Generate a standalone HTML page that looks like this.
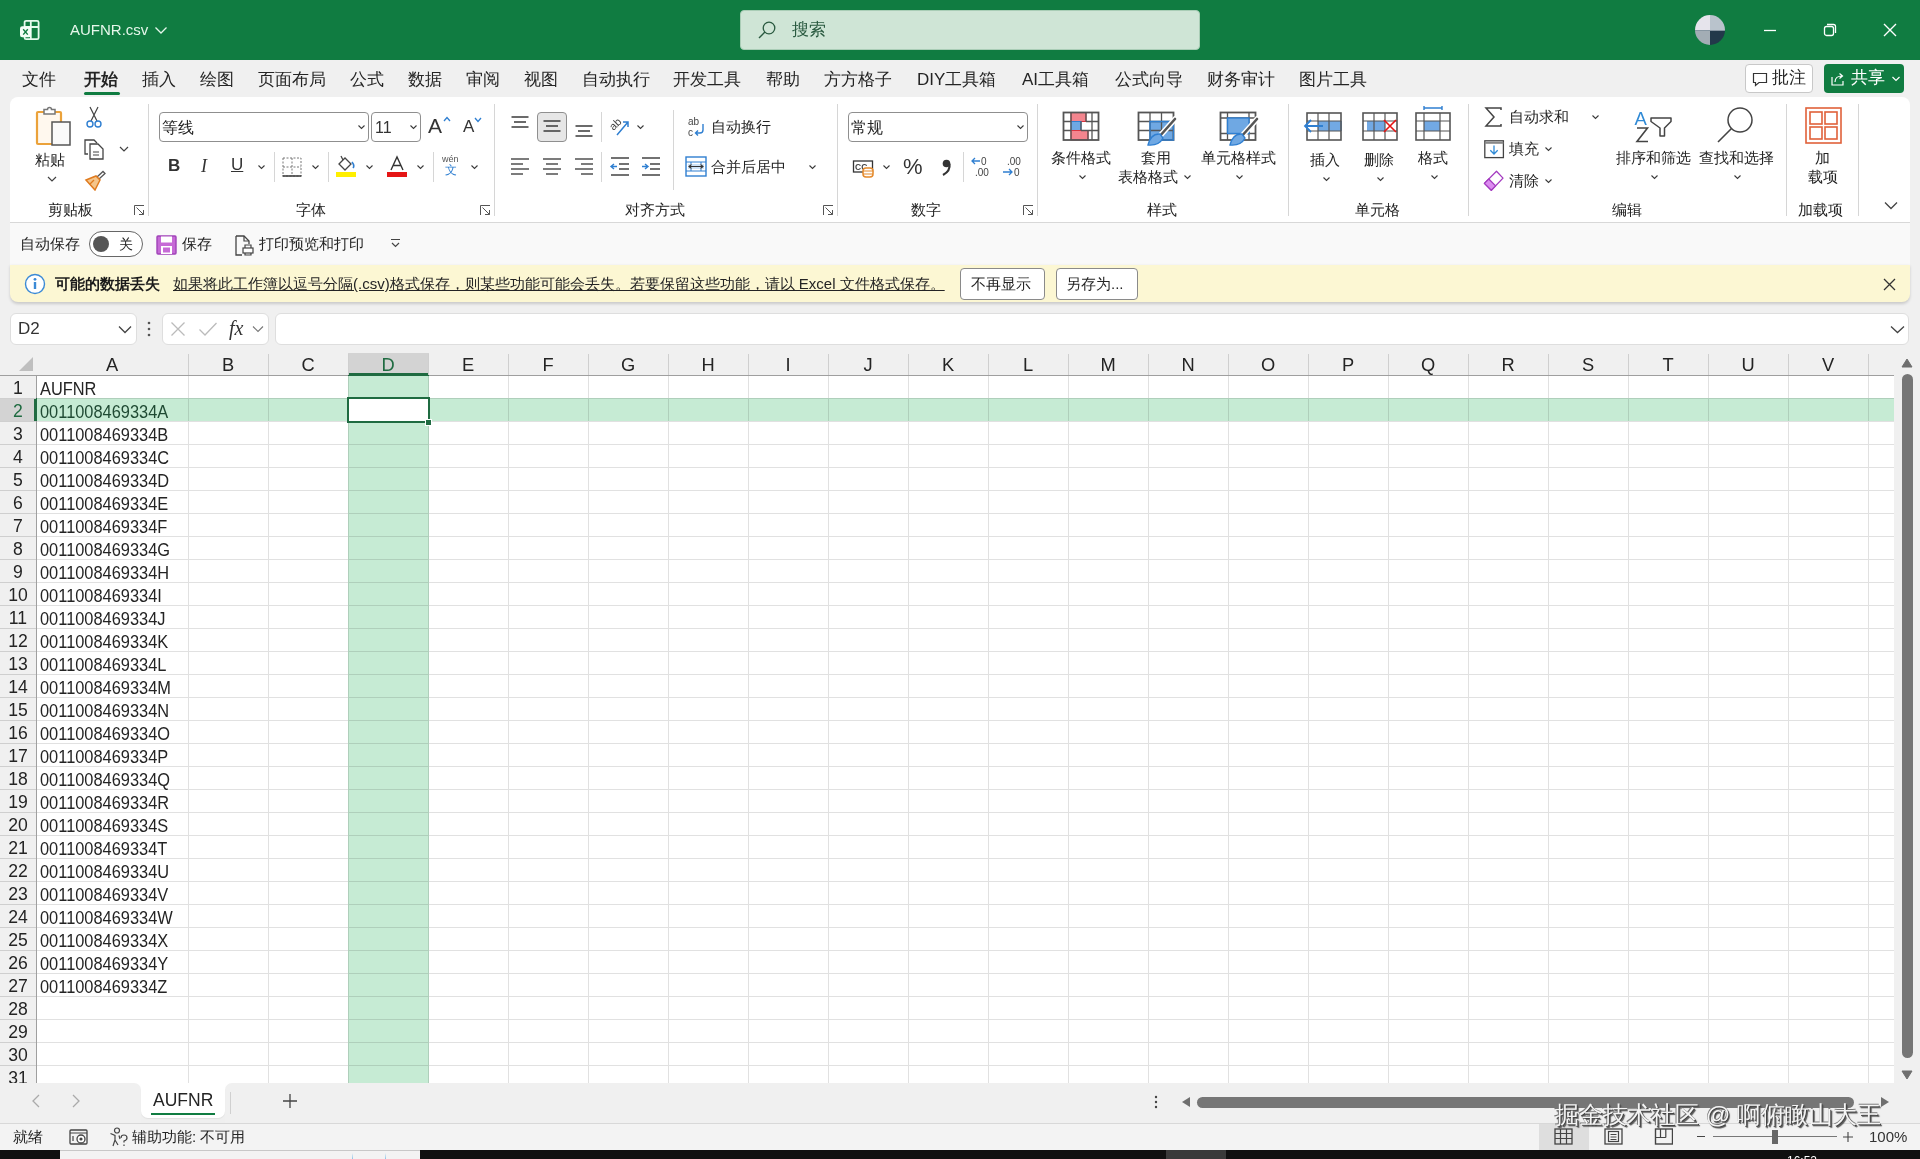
<!DOCTYPE html>
<html><head><meta charset="utf-8">
<style>
*{margin:0;padding:0;box-sizing:border-box}
html,body{width:1920px;height:1159px;overflow:hidden;background:#efefef;font-family:"Liberation Sans",sans-serif;color:#242424}
.a{position:absolute;white-space:nowrap}
#grid{position:absolute;left:0;top:353px;width:1894px;height:730px;background:#fff;overflow:hidden}
.hl{position:absolute;left:36px;width:1858px;height:1px;background:#e1e1e1}
.vl{position:absolute;top:22px;width:1px;height:708px;background:#e1e1e1}
.hs{position:absolute;top:1px;width:1px;height:21px;background:#cfcfcf}
.rs{position:absolute;left:0;width:36px;height:1px;background:#cfcfcf}
.ch{position:absolute;top:0;height:22px;line-height:24px;text-align:center;font-size:18.3px}
.rh{position:absolute;left:0;width:36px;height:23px;line-height:23px;text-align:center;font-size:17.6px}
.cell{position:absolute;left:40px;height:23px;line-height:24px;font-size:16.4px;transform:scaleY(1.09);transform-origin:0 17px}
.tab{position:absolute;top:69px;font-size:17px;line-height:22px;color:#242424}
.rl{position:absolute;font-size:15px;line-height:20px;color:#242424;white-space:nowrap}
.sep{position:absolute;width:1px;background:#d6d6d6}
.chev{position:absolute}
.dd{position:absolute;background:#fff;border:1px solid #8f8f8f;border-radius:4px}

</style></head><body>
<div class="a" style="left:0;top:0;width:1920px;height:60px;background:#107c41"></div>
<svg class="a" style="left:18px;top:18px" width="24" height="24" viewBox="0 0 24 24"><rect x="6.6" y="2.8" width="14" height="18.4" rx="1.5" fill="none" stroke="#e6fbee" stroke-width="1.8"/><path d="M6.6 9H20.6M12.8 2.8V21.2" stroke="#e6fbee" stroke-width="1.8"/><rect x="2" y="8.3" width="11" height="11" rx="2.2" fill="#f4fff8"/><path d="M5.2 11.3L9.8 16.6M9.8 11.3L5.2 16.6" stroke="#107c41" stroke-width="1.4"/></svg>
<div class="a" style="left:70px;top:20px;font-size:15px;line-height:20px;color:#e6f7eb">AUFNR.csv</div>
<svg class="a" style="left:154px;top:25px" width="14" height="10"><path d="M1.5 2.5L7 8L12.5 2.5" fill="none" stroke="#e6f7eb" stroke-width="1.3"/></svg>
<div class="a" style="left:740px;top:10px;width:460px;height:40px;background:#cfe5d6;border:1px solid #a9cdb6;border-radius:4px"></div>
<svg class="a" style="left:756px;top:19px" width="22" height="22" viewBox="0 0 22 22"><circle cx="13" cy="9" r="5.8" fill="none" stroke="#2a5a40" stroke-width="1.3"/><path d="M8.9 13.1L3 19" stroke="#2a5a40" stroke-width="1.4"/></svg>
<div class="a" style="left:792px;top:19px;font-size:17px;line-height:22px;color:#2a5a40">搜索</div>
<svg class="a" style="left:1695px;top:15px" width="30" height="30" viewBox="0 0 30 30"><defs><clipPath id="av"><circle cx="15" cy="15" r="15"/></clipPath></defs><g clip-path="url(#av)"><rect width="15" height="15" fill="#e6e4ec"/><rect x="15" y="0" width="15" height="15" fill="#b9c3cc"/><rect x="0" y="15" width="15" height="15" fill="#a3adb5"/><rect x="15" y="15" width="15" height="15" fill="#22394a"/><path d="M0 15.5H30" stroke="#8796a2" stroke-width="1"/></g></svg>
<svg class="a" style="left:1762px;top:22px" width="16" height="16"><path d="M2 8.5H14" stroke="#fff" stroke-width="1.3"/></svg>
<svg class="a" style="left:1822px;top:22px" width="16" height="16"><rect x="2.5" y="4.5" width="9" height="9" rx="2" fill="none" stroke="#fff" stroke-width="1.3"/><path d="M5 2.5H11.5A2 2 0 0 1 13.5 4.5V11" fill="none" stroke="#fff" stroke-width="1.3"/></svg>
<svg class="a" style="left:1881px;top:21px" width="18" height="18"><path d="M3 3L15 15M15 3L3 15" stroke="#fff" stroke-width="1.4"/></svg>
<div class="a" style="left:0;top:60px;width:1920px;height:293px;background:#f0f0f0"></div>
<div class="tab" style="left:22px">文件</div>
<div class="tab" style="left:84px;font-weight:bold">开始</div>
<div class="a" style="left:84px;top:92px;width:36px;height:3px;border-radius:2px;background:#107c41"></div>
<div class="tab" style="left:142px">插入</div>
<div class="tab" style="left:200px">绘图</div>
<div class="tab" style="left:258px">页面布局</div>
<div class="tab" style="left:350px">公式</div>
<div class="tab" style="left:408px">数据</div>
<div class="tab" style="left:466px">审阅</div>
<div class="tab" style="left:524px">视图</div>
<div class="tab" style="left:582px">自动执行</div>
<div class="tab" style="left:673px">开发工具</div>
<div class="tab" style="left:766px">帮助</div>
<div class="tab" style="left:824px">方方格子</div>
<div class="tab" style="left:917px">DIY工具箱</div>
<div class="tab" style="left:1022px">AI工具箱</div>
<div class="tab" style="left:1115px">公式向导</div>
<div class="tab" style="left:1207px">财务审计</div>
<div class="tab" style="left:1299px">图片工具</div>
<div class="a" style="left:1745px;top:64px;width:68px;height:29px;background:#fff;border:1px solid #c8c8c8;border-radius:4px"></div>
<svg class="a" style="left:1751px;top:70px" width="18" height="18"><path d="M2.5 3.5H15.5V12.5H8L4.5 15.5V12.5H2.5Z" fill="none" stroke="#333" stroke-width="1.2"/></svg>
<div class="a" style="left:1772px;top:67px;font-size:17px;line-height:22px;color:#242424">批注</div>
<div class="a" style="left:1824px;top:64px;width:80px;height:29px;background:#107c41;border-radius:4px"></div>
<svg class="a" style="left:1829px;top:70px" width="18" height="18"><path d="M3 7V15H14V11" fill="none" stroke="#fff" stroke-width="1.2"/><path d="M6 12C6 8 9 6 13 6M10.5 3.5L13.5 6L10.5 8.5" fill="none" stroke="#fff" stroke-width="1.2"/></svg>
<div class="a" style="left:1851px;top:67px;font-size:17px;line-height:22px;color:#fff">共享</div>
<svg class="a" style="left:1891px;top:75px" width="10" height="8"><path d="M1.5 2L5 5.5L8.5 2" fill="none" stroke="#fff" stroke-width="1.2"/></svg>
<div class="a" style="left:10px;top:97px;width:1900px;height:125px;background:#fff;border-radius:8px 8px 0 0"></div>
<svg class="a" style="left:35px;top:106px" width="38" height="42" viewBox="0 0 38 42"><rect x="2" y="6" width="24" height="32" rx="1" fill="#fff8ee" stroke="#eba23a" stroke-width="2.2"/><path d="M9 6V3.5H12.5A2 2 0 0 1 16.5 3.5H20V8H9Z" fill="#fff" stroke="#777" stroke-width="1.5"/><rect x="17" y="16" width="18" height="23" fill="#fafafa" stroke="#555" stroke-width="1.5"/></svg>
<div class="rl" style="left:35px;top:150px;">粘贴</div>
<svg class="a" style="left:47px;top:176px" width="10" height="6"><path d="M1 1L5.0 5L9 1" fill="none" stroke="#424242" stroke-width="1.2"/></svg>
<svg class="a" style="left:85px;top:106px" width="18" height="23" viewBox="0 0 18 23"><path d="M5 1L12 15M13 1L6 15" stroke="#444" stroke-width="1.2" fill="none"/><circle cx="5" cy="18" r="3" fill="none" stroke="#2f7fd1" stroke-width="1.4"/><circle cx="13" cy="18" r="3" fill="none" stroke="#2f7fd1" stroke-width="1.4"/></svg>
<svg class="a" style="left:83px;top:139px" width="22" height="21" viewBox="0 0 22 21"><path d="M5 15H2V1H11L14 4" fill="none" stroke="#444" stroke-width="1.3"/><path d="M7 5H15L20 10V20H7Z" fill="#fff" stroke="#444" stroke-width="1.3"/><path d="M10 13H16M10 16H16" stroke="#444" stroke-width="1"/></svg>
<svg class="a" style="left:119px;top:146px" width="10" height="6"><path d="M1 1L5.0 5L9 1" fill="none" stroke="#424242" stroke-width="1.2"/></svg>
<svg class="a" style="left:84px;top:170px" width="22" height="21" viewBox="0 0 22 21"><path d="M13 7L19 1.5L21 3.5L15 9" fill="none" stroke="#555" stroke-width="1.3"/><path d="M2 10L12 6L16 10L11 20Z" fill="#f5c58a" stroke="#e07b1f" stroke-width="1.5"/><path d="M6 14L10 10" stroke="#e07b1f" stroke-width="1.2"/></svg>
<div class="rl" style="left:48px;top:200px;">剪贴板</div>
<svg class="a" style="left:134px;top:205px" width="11" height="11"><path d="M0.5 10V0.5H10M2.5 2.5L9.5 9.5M5 9.5H9.5V5" fill="none" stroke="#555" stroke-width="1"/></svg>
<div class="sep" style="left:148px;top:104px;height:112px"></div>
<div class="dd" style="left:159px;top:112px;width:210px;height:30px"></div>
<div class="rl" style="left:162px;top:118px;font-size:16px">等线</div>
<svg class="a" style="left:357px;top:124px" width="9" height="6"><path d="M1.5 1.5L4.5 4.5L7.5 1.5" fill="none" stroke="#3a3a3a" stroke-width="1.1"/></svg>
<div class="dd" style="left:371px;top:112px;width:50px;height:30px"></div>
<div class="a" style="left:375px;top:118px;font-size:16px;line-height:20px;color:#333">11</div>
<svg class="a" style="left:409px;top:124px" width="9" height="6"><path d="M1.5 1.5L4.5 4.5L7.5 1.5" fill="none" stroke="#3a3a3a" stroke-width="1.1"/></svg>
<div class="a" style="left:428px;top:114px;font-size:21px;line-height:24px;color:#333">A</div><svg class="a" style="left:443px;top:116px" width="8" height="6"><path d="M1 5L4 1.5L7 5" fill="none" stroke="#2f7fd1" stroke-width="1.3"/></svg>
<div class="a" style="left:463px;top:117px;font-size:17px;line-height:20px;color:#333">A</div><svg class="a" style="left:474px;top:117px" width="8" height="6"><path d="M1 1L4 4.5L7 1" fill="none" stroke="#2f7fd1" stroke-width="1.3"/></svg>
<div class="a" style="left:168px;top:156px;font-size:17px;line-height:20px;font-weight:bold;color:#333">B</div>
<div class="a" style="left:201px;top:156px;font-size:18px;line-height:20px;font-style:italic;font-family:'Liberation Serif',serif;color:#333">I</div>
<div class="a" style="left:231px;top:155px;font-size:17px;line-height:20px;color:#333;text-decoration:underline">U</div>
<svg class="a" style="left:257px;top:164px" width="9" height="6"><path d="M1.5 1.5L4.5 4.5L7.5 1.5" fill="none" stroke="#3a3a3a" stroke-width="1.1"/></svg>
<div class="sep" style="left:274px;top:152px;height:30px"></div>
<svg class="a" style="left:282px;top:157px" width="20" height="20" viewBox="0 0 20 20"><rect x="1" y="1" width="18" height="18" fill="none" stroke="#777" stroke-width="1" stroke-dasharray="2 1.5"/><path d="M10 1V19M1 10H19" stroke="#777" stroke-width="1" stroke-dasharray="2 1.5"/><path d="M0.5 19H19.5" stroke="#444" stroke-width="1.6"/></svg>
<svg class="a" style="left:311px;top:164px" width="9" height="6"><path d="M1.5 1.5L4.5 4.5L7.5 1.5" fill="none" stroke="#3a3a3a" stroke-width="1.1"/></svg>
<div class="sep" style="left:328px;top:152px;height:30px"></div>
<svg class="a" style="left:335px;top:154px" width="22" height="24" viewBox="0 0 22 24"><path d="M4 10L10 4L16 10L10 16Z" fill="#fff" stroke="#444" stroke-width="1.3"/><path d="M8 6L6 2" stroke="#444" stroke-width="1.3"/><path d="M17 8Q20 12 18 14" fill="none" stroke="#2f7fd1" stroke-width="1.6"/><rect x="1" y="18" width="20" height="5" fill="#ffef00"/></svg>
<svg class="a" style="left:365px;top:164px" width="9" height="6"><path d="M1.5 1.5L4.5 4.5L7.5 1.5" fill="none" stroke="#3a3a3a" stroke-width="1.1"/></svg>
<svg class="a" style="left:386px;top:154px" width="22" height="24" viewBox="0 0 22 24"><path d="M5 16L11 3L17 16M7.3 11.5H14.7" fill="none" stroke="#333" stroke-width="1.4"/><rect x="1" y="18" width="20" height="5" fill="#e51515"/></svg>
<svg class="a" style="left:416px;top:164px" width="9" height="6"><path d="M1.5 1.5L4.5 4.5L7.5 1.5" fill="none" stroke="#3a3a3a" stroke-width="1.1"/></svg>
<div class="sep" style="left:433px;top:152px;height:30px"></div>
<div class="a" style="left:442px;top:154px;font-size:9px;line-height:10px;color:#555">wén</div><div class="a" style="left:445px;top:163px;font-size:12px;line-height:14px;color:#2f7fd1">文</div>
<svg class="a" style="left:470px;top:164px" width="9" height="6"><path d="M1.5 1.5L4.5 4.5L7.5 1.5" fill="none" stroke="#3a3a3a" stroke-width="1.1"/></svg>
<div class="rl" style="left:296px;top:200px;">字体</div>
<svg class="a" style="left:480px;top:205px" width="11" height="11"><path d="M0.5 10V0.5H10M2.5 2.5L9.5 9.5M5 9.5H9.5V5" fill="none" stroke="#555" stroke-width="1"/></svg>
<div class="sep" style="left:494px;top:104px;height:112px"></div>
<svg class="a" style="left:510px;top:115px" width="22" height="19"><path d="M1.5 2 H18.5" stroke="#3a3a3a" stroke-width="1.5"/><path d="M4 7 H16" stroke="#3a3a3a" stroke-width="1.5"/><path d="M1.5 12 H18.5" stroke="#3a3a3a" stroke-width="1.5"/></svg>
<div class="a" style="left:537px;top:112px;width:30px;height:30px;background:#e6e6e6;border:1px solid #8f8f8f;border-radius:4px"></div>
<svg class="a" style="left:542px;top:119px" width="22" height="19"><path d="M1.5 2 H18.5" stroke="#3a3a3a" stroke-width="1.5"/><path d="M4 7 H16" stroke="#3a3a3a" stroke-width="1.5"/><path d="M1.5 12 H18.5" stroke="#3a3a3a" stroke-width="1.5"/></svg>
<svg class="a" style="left:574px;top:124px" width="22" height="19"><path d="M1.5 2 H18.5" stroke="#3a3a3a" stroke-width="1.5"/><path d="M4 7 H16" stroke="#3a3a3a" stroke-width="1.5"/><path d="M1.5 12 H18.5" stroke="#3a3a3a" stroke-width="1.5"/></svg>
<div class="sep" style="left:601px;top:112px;height:30px"></div>
<svg class="a" style="left:607px;top:114px" width="26" height="24" viewBox="0 0 26 24"><text x="2" y="14" font-size="11" fill="#444" transform="rotate(-45 8 10)" font-family="Liberation Sans">ab</text><path d="M10 21L21 8M16 8H21V13" fill="none" stroke="#2f7fd1" stroke-width="1.5"/></svg>
<svg class="a" style="left:636px;top:124px" width="9" height="6"><path d="M1.5 1.5L4.5 4.5L7.5 1.5" fill="none" stroke="#3a3a3a" stroke-width="1.1"/></svg>
<div class="sep" style="left:673px;top:110px;height:80px"></div>
<svg class="a" style="left:687px;top:116px" width="22" height="22" viewBox="0 0 22 22"><text x="1" y="9" font-size="10" fill="#444" font-family="Liberation Sans">ab</text><text x="1" y="20" font-size="10" fill="#444" font-family="Liberation Sans">c</text><path d="M16 8V14Q16 17 13 17H9M11 14.5L8.5 17L11 19.5" fill="none" stroke="#2f7fd1" stroke-width="1.4"/></svg>
<div class="rl" style="left:711px;top:117px;">自动换行</div>
<svg class="a" style="left:510px;top:157px" width="22" height="24"><path d="M1 2 H19" stroke="#444" stroke-width="1.4"/><path d="M1 7 H13" stroke="#444" stroke-width="1.4"/><path d="M1 12 H19" stroke="#444" stroke-width="1.4"/><path d="M1 17 H13" stroke="#444" stroke-width="1.4"/></svg>
<svg class="a" style="left:542px;top:157px" width="22" height="24"><path d="M1 2 H19" stroke="#444" stroke-width="1.4"/><path d="M4 7 H16" stroke="#444" stroke-width="1.4"/><path d="M1 12 H19" stroke="#444" stroke-width="1.4"/><path d="M4 17 H16" stroke="#444" stroke-width="1.4"/></svg>
<svg class="a" style="left:574px;top:157px" width="22" height="24"><path d="M1 2 H19" stroke="#444" stroke-width="1.4"/><path d="M7 7 H19" stroke="#444" stroke-width="1.4"/><path d="M1 12 H19" stroke="#444" stroke-width="1.4"/><path d="M7 17 H19" stroke="#444" stroke-width="1.4"/></svg>
<div class="sep" style="left:601px;top:152px;height:30px"></div>
<svg class="a" style="left:609px;top:156px" width="22" height="22" viewBox="0 0 22 22"><path d="M2 2H20M10 8H20M10 13H20M2 19H20" stroke="#444" stroke-width="1.4"/><path d="M8 10.5H2M5 8L2 10.5L5 13" fill="none" stroke="#2f7fd1" stroke-width="1.4"/></svg>
<svg class="a" style="left:640px;top:156px" width="22" height="22" viewBox="0 0 22 22"><path d="M2 2H20M10 8H20M10 13H20M2 19H20" stroke="#444" stroke-width="1.4"/><path d="M2 10.5H8M5 8L8 10.5L5 13" fill="none" stroke="#2f7fd1" stroke-width="1.4"/></svg>
<svg class="a" style="left:685px;top:156px" width="22" height="21" viewBox="0 0 22 21"><rect x="1" y="1" width="20" height="19" fill="#fff" stroke="#2f7fd1" stroke-width="1.4"/><path d="M1 6H21M1 15H21M6 6V15M16 6V15" stroke="#2f7fd1" stroke-width="1"/><rect x="3" y="8" width="16" height="5" fill="#cfe3f7"/><path d="M4 10.5H18M6.5 8.5L4 10.5L6.5 12.5M15.5 8.5L18 10.5L15.5 12.5" fill="none" stroke="#333" stroke-width="1.1"/></svg>
<div class="rl" style="left:711px;top:157px;">合并后居中</div>
<svg class="a" style="left:808px;top:164px" width="9" height="6"><path d="M1.5 1.5L4.5 4.5L7.5 1.5" fill="none" stroke="#3a3a3a" stroke-width="1.1"/></svg>
<div class="rl" style="left:625px;top:200px;">对齐方式</div>
<svg class="a" style="left:823px;top:205px" width="11" height="11"><path d="M0.5 10V0.5H10M2.5 2.5L9.5 9.5M5 9.5H9.5V5" fill="none" stroke="#555" stroke-width="1"/></svg>
<div class="sep" style="left:837px;top:104px;height:112px"></div>
<div class="dd" style="left:848px;top:112px;width:180px;height:30px"></div>
<div class="rl" style="left:851px;top:118px;font-size:16px">常规</div>
<svg class="a" style="left:1016px;top:124px" width="9" height="6"><path d="M1.5 1.5L4.5 4.5L7.5 1.5" fill="none" stroke="#3a3a3a" stroke-width="1.1"/></svg>
<svg class="a" style="left:852px;top:156px" width="24" height="22" viewBox="0 0 24 22"><rect x="1.5" y="5" width="19" height="11" fill="#fff" stroke="#333" stroke-width="1.3"/><text x="3" y="14" font-size="8.5" font-weight="bold" fill="#444" font-family="Liberation Sans">CC</text><rect x="11" y="12" width="10" height="9" rx="3" fill="#fff" stroke="#e5892a" stroke-width="1.5"/><path d="M11 15H21M11 18H21" stroke="#e5892a" stroke-width="1.1"/></svg>
<svg class="a" style="left:882px;top:164px" width="9" height="6"><path d="M1.5 1.5L4.5 4.5L7.5 1.5" fill="none" stroke="#3a3a3a" stroke-width="1.1"/></svg>
<div class="a" style="left:903px;top:155px;font-size:22px;line-height:24px;color:#333">%</div>
<svg class="a" style="left:940px;top:159px" width="12" height="17" viewBox="0 0 12 17"><circle cx="6.5" cy="4.5" r="3.8" fill="#333"/><path d="M9.5 5Q10.5 12 3 16" fill="none" stroke="#333" stroke-width="2.2"/></svg>
<div class="sep" style="left:963px;top:152px;height:30px"></div>
<svg class="a" style="left:970px;top:155px" width="22" height="24" viewBox="0 0 22 24"><text x="11" y="10" font-size="10" fill="#444" font-family="Liberation Sans">0</text><text x="5" y="21" font-size="10" fill="#444" font-family="Liberation Sans">.00</text><path d="M10 6H2M5 3L2 6L5 9" fill="none" stroke="#2f7fd1" stroke-width="1.3"/></svg>
<svg class="a" style="left:1001px;top:155px" width="22" height="24" viewBox="0 0 22 24"><text x="6" y="10" font-size="10" fill="#444" font-family="Liberation Sans">.00</text><text x="13" y="21" font-size="10" fill="#444" font-family="Liberation Sans">0</text><path d="M2 17H11M8 14L11 17L8 20" fill="none" stroke="#2f7fd1" stroke-width="1.3"/></svg>
<div class="rl" style="left:911px;top:200px;">数字</div>
<svg class="a" style="left:1023px;top:205px" width="11" height="11"><path d="M0.5 10V0.5H10M2.5 2.5L9.5 9.5M5 9.5H9.5V5" fill="none" stroke="#555" stroke-width="1"/></svg>
<div class="sep" style="left:1037px;top:104px;height:112px"></div>
<svg class="a" style="left:1062px;top:111px" width="38" height="31" viewBox="0 0 38 31"><rect x="9" y="1.5" width="15" height="9" fill="#f4858e" stroke="#d9343f" stroke-width="1"/><rect x="9" y="10.5" width="10" height="9" fill="#6fa8e3" stroke="#2f7fd1" stroke-width="1"/><rect x="9" y="19.5" width="17" height="9.5" fill="#f4858e" stroke="#d9343f" stroke-width="1"/><rect x="1.5" y="1.5" width="35" height="27.5" fill="none" stroke="#555" stroke-width="1.8"/><path d="M9 1.5V29M24 1.5V10.5M19 10.5V19.5M26 19.5V29M30 1.5V29M1.5 10.5H9M24 10.5H36.5M1.5 19.5H9M19 19.5H36.5" stroke="#555" stroke-width="1.3" fill="none"/></svg>
<div class="rl" style="left:1051px;top:148px;">条件格式</div>
<svg class="a" style="left:1078px;top:174px" width="9" height="6"><path d="M1.5 1.5L4.5 4.5L7.5 1.5" fill="none" stroke="#3a3a3a" stroke-width="1.1"/></svg>
<svg class="a" style="left:1137px;top:111px" width="40" height="36" viewBox="0 0 40 36"><rect x="13" y="10.5" width="23.5" height="18.5" fill="#6fa8e3"/><rect x="1.5" y="1.5" width="35" height="27.5" fill="none" stroke="#555" stroke-width="1.8"/><path d="M13 1.5V29M24.5 1.5V29M1.5 10.5H36.5M1.5 19.5H36.5" stroke="#555" stroke-width="1.3"/><path d="M13 10.5H36.5V29H13Z" fill="none" stroke="#2f7fd1" stroke-width="1.3"/><path d="M38 8L22 26" stroke="#fff" stroke-width="5.5" stroke-linecap="round"/><path d="M38 8L22 26" stroke="#555" stroke-width="2.6" stroke-linecap="round"/><path d="M23 23Q14 22 11 34Q22 35 26 27Z" fill="#6fa8e3" stroke="#2f7fd1" stroke-width="1.4"/></svg>
<div class="rl" style="left:1141px;top:148px;">套用</div>
<div class="rl" style="left:1118px;top:167px;">表格格式</div>
<svg class="a" style="left:1183px;top:174px" width="9" height="6"><path d="M1.5 1.5L4.5 4.5L7.5 1.5" fill="none" stroke="#3a3a3a" stroke-width="1.1"/></svg>
<svg class="a" style="left:1219px;top:111px" width="40" height="36" viewBox="0 0 40 36"><rect x="1.5" y="1.5" width="35" height="27.5" fill="none" stroke="#555" stroke-width="1.8"/><path d="M8.5 1.5V29M30 1.5V29M1.5 7H36.5M1.5 22.5H36.5" stroke="#555" stroke-width="1.3"/><rect x="8.5" y="7" width="21.5" height="15.5" fill="#6fa8e3" stroke="#2f7fd1" stroke-width="1.4"/><path d="M38 8L22 26" stroke="#fff" stroke-width="5.5" stroke-linecap="round"/><path d="M38 8L22 26" stroke="#555" stroke-width="2.6" stroke-linecap="round"/><path d="M23 23Q14 22 11 34Q22 35 26 27Z" fill="#6fa8e3" stroke="#2f7fd1" stroke-width="1.4"/></svg>
<div class="rl" style="left:1201px;top:148px;">单元格样式</div>
<svg class="a" style="left:1235px;top:174px" width="9" height="6"><path d="M1.5 1.5L4.5 4.5L7.5 1.5" fill="none" stroke="#3a3a3a" stroke-width="1.1"/></svg>
<div class="rl" style="left:1147px;top:200px;">样式</div>
<div class="sep" style="left:1288px;top:104px;height:112px"></div>
<svg class="a" style="left:1306px;top:112px" width="36" height="29" viewBox="0 0 36 29"><rect x="12" y="9" width="28" height="10" fill="#72a9e4"/><rect x="1" y="1" width="34" height="27" fill="none" stroke="#555" stroke-width="1.6"/><path d="M12 1V28" stroke="#555" stroke-width="1.2"/><path d="M23 1V28" stroke="#555" stroke-width="1.2"/><path d="M1 9H35" stroke="#555" stroke-width="1.2"/><path d="M1 19H35" stroke="#555" stroke-width="1.2"/></svg><svg class="a" style="left:1303px;top:118px" width="22" height="16"><path d="M20 8H3M8 2L2 8L8 14" fill="none" stroke="#2f7fd1" stroke-width="1.8"/></svg>
<div class="rl" style="left:1310px;top:150px;">插入</div>
<svg class="a" style="left:1322px;top:176px" width="9" height="6"><path d="M1.5 1.5L4.5 4.5L7.5 1.5" fill="none" stroke="#3a3a3a" stroke-width="1.1"/></svg>
<svg class="a" style="left:1362px;top:112px" width="36" height="29" viewBox="0 0 36 29"><rect x="5" y="9" width="18" height="10" fill="#72a9e4"/><rect x="1" y="1" width="34" height="27" fill="none" stroke="#555" stroke-width="1.6"/><path d="M12 1V28" stroke="#555" stroke-width="1.2"/><path d="M23 1V28" stroke="#555" stroke-width="1.2"/><path d="M1 9H35" stroke="#555" stroke-width="1.2"/><path d="M1 19H35" stroke="#555" stroke-width="1.2"/></svg><svg class="a" style="left:1382px;top:118px" width="16" height="16"><path d="M2 2L14 14M14 2L2 14" stroke="#e51515" stroke-width="1.6"/></svg>
<div class="rl" style="left:1364px;top:150px;">删除</div>
<svg class="a" style="left:1376px;top:176px" width="9" height="6"><path d="M1.5 1.5L4.5 4.5L7.5 1.5" fill="none" stroke="#3a3a3a" stroke-width="1.1"/></svg>
<svg class="a" style="left:1423px;top:105px" width="20" height="6"><path d="M1 1V5M19 1V5M1 3H19" stroke="#2f7fd1" stroke-width="1.4"/></svg>
<svg class="a" style="left:1415px;top:112px" width="36" height="29" viewBox="0 0 36 29"><rect x="9" y="9" width="16" height="10" fill="#72a9e4"/><rect x="1" y="1" width="34" height="27" fill="none" stroke="#555" stroke-width="1.6"/><path d="M9 1V28" stroke="#555" stroke-width="1.2"/><path d="M25 1V28" stroke="#555" stroke-width="1.2"/><path d="M1 9H35" stroke="#555" stroke-width="1.2"/><path d="M1 19H35" stroke="#555" stroke-width="1.2"/></svg>
<div class="rl" style="left:1418px;top:148px;">格式</div>
<svg class="a" style="left:1430px;top:174px" width="9" height="6"><path d="M1.5 1.5L4.5 4.5L7.5 1.5" fill="none" stroke="#3a3a3a" stroke-width="1.1"/></svg>
<div class="rl" style="left:1355px;top:200px;">单元格</div>
<div class="sep" style="left:1468px;top:104px;height:112px"></div>
<svg class="a" style="left:1484px;top:107px" width="20" height="20"><path d="M17 3V1H2L10 10L2 19H17V17" fill="none" stroke="#444" stroke-width="1.5"/></svg>
<div class="rl" style="left:1509px;top:107px;">自动求和</div>
<svg class="a" style="left:1591px;top:114px" width="9" height="6"><path d="M1.5 1.5L4.5 4.5L7.5 1.5" fill="none" stroke="#3a3a3a" stroke-width="1.1"/></svg>
<svg class="a" style="left:1483px;top:139px" width="22" height="20" viewBox="0 0 22 20"><rect x="1.8" y="1.8" width="18.6" height="16.8" fill="#fff" stroke="#444" stroke-width="1.3"/><path d="M1.8 3.8H20.4" stroke="#888" stroke-width="2"/><path d="M11 6.5V15M7.3 11.3L11 15L14.7 11.3" fill="none" stroke="#2f8ad6" stroke-width="1.3"/></svg>
<div class="rl" style="left:1509px;top:139px;">填充</div>
<svg class="a" style="left:1544px;top:146px" width="9" height="6"><path d="M1.5 1.5L4.5 4.5L7.5 1.5" fill="none" stroke="#3a3a3a" stroke-width="1.1"/></svg>
<svg class="a" style="left:1483px;top:170px" width="22" height="22" viewBox="0 0 22 22"><path d="M13.5 1.3L20 8.1L8.3 20.3L1.4 13.4Z" fill="#fff" stroke="#a43bc0" stroke-width="1.3" stroke-linejoin="round"/><path d="M1.4 13.4L5.8 9L12.6 15.9L8.3 20.3Z" fill="#dc8cf0" stroke="#a43bc0" stroke-width="1.3" stroke-linejoin="round"/></svg>
<div class="rl" style="left:1509px;top:171px;">清除</div>
<svg class="a" style="left:1544px;top:178px" width="9" height="6"><path d="M1.5 1.5L4.5 4.5L7.5 1.5" fill="none" stroke="#3a3a3a" stroke-width="1.1"/></svg>
<svg class="a" style="left:1633px;top:106px" width="40" height="38" viewBox="0 0 40 38"><text x="1.5" y="18.5" font-size="18.5" fill="#2f8ad6" font-family="Liberation Sans">A</text><path d="M4 22H14.5L4 35.5H15" fill="none" stroke="#444" stroke-width="1.6"/><path d="M18 12H38V15.5L31.5 22V30H27V22L18 15.5Z" fill="none" stroke="#444" stroke-width="1.5" stroke-linejoin="round"/></svg>
<div class="rl" style="left:1616px;top:148px;">排序和筛选</div>
<svg class="a" style="left:1650px;top:174px" width="9" height="6"><path d="M1.5 1.5L4.5 4.5L7.5 1.5" fill="none" stroke="#3a3a3a" stroke-width="1.1"/></svg>
<svg class="a" style="left:1716px;top:106px" width="40" height="40" viewBox="0 0 40 40"><circle cx="24" cy="14" r="12" fill="none" stroke="#444" stroke-width="1.5"/><path d="M15.5 22.5L2 36" stroke="#444" stroke-width="1.6"/></svg>
<div class="rl" style="left:1699px;top:148px;">查找和选择</div>
<svg class="a" style="left:1733px;top:174px" width="9" height="6"><path d="M1.5 1.5L4.5 4.5L7.5 1.5" fill="none" stroke="#3a3a3a" stroke-width="1.1"/></svg>
<div class="rl" style="left:1612px;top:200px;">编辑</div>
<div class="sep" style="left:1786px;top:104px;height:112px"></div>
<svg class="a" style="left:1805px;top:107px" width="37" height="37" viewBox="0 0 37 37"><rect x="1" y="1" width="35" height="35" fill="none" stroke="#e0613a" stroke-width="1.6"/><rect x="5" y="5" width="12" height="12" fill="none" stroke="#e0613a" stroke-width="1.6"/><rect x="20" y="5" width="12" height="12" fill="none" stroke="#e0613a" stroke-width="1.6"/><rect x="5" y="20" width="12" height="12" fill="none" stroke="#e0613a" stroke-width="1.6"/><rect x="20" y="20" width="12" height="12" fill="none" stroke="#e0613a" stroke-width="1.6"/></svg>
<div class="rl" style="left:1815px;top:148px;">加</div>
<div class="rl" style="left:1808px;top:167px;">载项</div>
<div class="rl" style="left:1798px;top:200px;">加载项</div>
<div class="sep" style="left:1858px;top:104px;height:112px"></div>
<svg class="a" style="left:1884px;top:201px" width="14" height="9"><path d="M1 1.5L7 7.5L13 1.5" fill="none" stroke="#444" stroke-width="1.3"/></svg>
<div class="a" style="left:10px;top:222px;width:1900px;height:43px;background:#f9f9f9;border-top:1px solid #d8d8d8"></div>
<div class="rl" style="left:20px;top:234px">自动保存</div>
<div class="a" style="left:89px;top:231px;width:54px;height:26px;border:1px solid #666;border-radius:13px;background:#fff"></div>
<div class="a" style="left:93px;top:236px;width:16px;height:16px;border-radius:8px;background:#555"></div>
<div class="rl" style="left:119px;top:234px;font-size:14px">关</div>
<svg class="a" style="left:156px;top:235px" width="21" height="20" viewBox="0 0 21 20"><rect x="1" y="1" width="19" height="18" rx="1" fill="#c66ad6" stroke="#a043b8" stroke-width="1.4"/><rect x="5" y="1.5" width="11" height="6" fill="#fff"/><rect x="5" y="11" width="11" height="8" fill="#fff"/><rect x="7" y="12.5" width="7" height="5" fill="#c66ad6"/></svg>
<div class="rl" style="left:182px;top:234px">保存</div>
<svg class="a" style="left:235px;top:235px" width="19" height="21" viewBox="0 0 19 21"><path d="M1 1H9L14 6V9M1 1V20H7" fill="none" stroke="#444" stroke-width="1.3"/><path d="M9 1V6H14" fill="none" stroke="#444" stroke-width="1.2"/><rect x="8" y="13" width="10" height="5" fill="#fff" stroke="#444" stroke-width="1.2"/><path d="M10 13V10H16V13M10 18V20H16V18" fill="none" stroke="#444" stroke-width="1.2"/></svg>
<div class="rl" style="left:259px;top:234px">打印预览和打印</div>
<svg class="a" style="left:390px;top:238px" width="11" height="11"><path d="M1 1.5H10M2 5L5.5 8.5L9 5" fill="none" stroke="#444" stroke-width="1.2"/></svg>
<div class="a" style="left:10px;top:265px;width:1900px;height:37px;background:#fcf7d3;border-radius:0 0 8px 8px;box-shadow:0 1.5px 3px rgba(0,0,0,.16)"></div>
<svg class="a" style="left:24px;top:273px" width="22" height="22" viewBox="0 0 22 22"><circle cx="11" cy="11" r="9.5" fill="#fff" stroke="#3b8ad6" stroke-width="1.4"/><rect x="9.8" y="9" width="2.4" height="7" fill="#3b8ad6"/><circle cx="11" cy="6.3" r="1.4" fill="#3b8ad6"/></svg>
<div class="rl" style="left:55px;top:274px;font-weight:bold;color:#1a1a1a">可能的数据丢失</div>
<div class="rl" style="left:173px;top:274px;text-decoration:underline;color:#242424">如果将此工作簿以逗号分隔(.csv)格式保存，则某些功能可能会丢失。若要保留这些功能，请以 Excel 文件格式保存。</div>
<div class="a" style="left:960px;top:268px;width:85px;height:32px;background:#fff;border:1px solid #8a8a8a;border-radius:4px"></div>
<div class="rl" style="left:971px;top:274px">不再显示</div>
<div class="a" style="left:1056px;top:268px;width:82px;height:32px;background:#fff;border:1px solid #8a8a8a;border-radius:4px"></div>
<div class="rl" style="left:1066px;top:274px">另存为...</div>
<svg class="a" style="left:1883px;top:278px" width="13" height="13"><path d="M1 1L12 12M12 1L1 12" stroke="#333" stroke-width="1.3"/></svg>
<div class="a" style="left:10px;top:313px;width:127px;height:32px;background:#fff;border:1px solid #dedede;border-radius:6px"></div>
<div class="a" style="left:18px;top:318px;font-size:17px;line-height:22px;color:#333">D2</div>
<svg class="a" style="left:118px;top:325px" width="14" height="9"><path d="M1 1.5L7 7.5L13 1.5" fill="none" stroke="#444" stroke-width="1.3"/></svg>
<svg class="a" style="left:147px;top:321px" width="4" height="16"><circle cx="2" cy="2" r="1.3" fill="#555"/><circle cx="2" cy="8" r="1.3" fill="#555"/><circle cx="2" cy="14" r="1.3" fill="#555"/></svg>
<div class="a" style="left:162px;top:313px;width:107px;height:32px;background:#fff;border:1px solid #dedede;border-radius:6px"></div>
<svg class="a" style="left:170px;top:321px" width="16" height="16"><path d="M1.5 1.5L14.5 14.5M14.5 1.5L1.5 14.5" stroke="#bbb" stroke-width="1.3"/></svg>
<svg class="a" style="left:198px;top:321px" width="20" height="16"><path d="M1.5 8.5L7 14L18.5 2" fill="none" stroke="#bbb" stroke-width="1.3"/></svg>
<div class="a" style="left:229px;top:315px;font-size:20px;line-height:26px;font-style:italic;font-family:'Liberation Serif',serif;color:#333">fx</div>
<svg class="a" style="left:252px;top:325px" width="12" height="8"><path d="M1 1.5L6 6.5L11 1.5" fill="none" stroke="#777" stroke-width="1.1"/></svg>
<div class="a" style="left:275px;top:313px;width:1634px;height:32px;background:#fff;border:1px solid #dedede;border-radius:6px"></div>
<svg class="a" style="left:1890px;top:325px" width="15" height="9"><path d="M1 1.5L7.5 7.5L14 1.5" fill="none" stroke="#444" stroke-width="1.3"/></svg>
<div id="grid">
<div class="hl" style="top:45px"></div>
<div class="hl" style="top:68px"></div>
<div class="hl" style="top:91px"></div>
<div class="hl" style="top:114px"></div>
<div class="hl" style="top:137px"></div>
<div class="hl" style="top:160px"></div>
<div class="hl" style="top:183px"></div>
<div class="hl" style="top:206px"></div>
<div class="hl" style="top:229px"></div>
<div class="hl" style="top:252px"></div>
<div class="hl" style="top:275px"></div>
<div class="hl" style="top:298px"></div>
<div class="hl" style="top:321px"></div>
<div class="hl" style="top:344px"></div>
<div class="hl" style="top:367px"></div>
<div class="hl" style="top:390px"></div>
<div class="hl" style="top:413px"></div>
<div class="hl" style="top:436px"></div>
<div class="hl" style="top:459px"></div>
<div class="hl" style="top:482px"></div>
<div class="hl" style="top:505px"></div>
<div class="hl" style="top:528px"></div>
<div class="hl" style="top:551px"></div>
<div class="hl" style="top:574px"></div>
<div class="hl" style="top:597px"></div>
<div class="hl" style="top:620px"></div>
<div class="hl" style="top:643px"></div>
<div class="hl" style="top:666px"></div>
<div class="hl" style="top:689px"></div>
<div class="hl" style="top:712px"></div>
<div class="hl" style="top:735px"></div>
<div class="vl" style="left:188px"></div>
<div class="vl" style="left:268px"></div>
<div class="vl" style="left:348px"></div>
<div class="vl" style="left:428px"></div>
<div class="vl" style="left:508px"></div>
<div class="vl" style="left:588px"></div>
<div class="vl" style="left:668px"></div>
<div class="vl" style="left:748px"></div>
<div class="vl" style="left:828px"></div>
<div class="vl" style="left:908px"></div>
<div class="vl" style="left:988px"></div>
<div class="vl" style="left:1068px"></div>
<div class="vl" style="left:1148px"></div>
<div class="vl" style="left:1228px"></div>
<div class="vl" style="left:1308px"></div>
<div class="vl" style="left:1388px"></div>
<div class="vl" style="left:1468px"></div>
<div class="vl" style="left:1548px"></div>
<div class="vl" style="left:1628px"></div>
<div class="vl" style="left:1708px"></div>
<div class="vl" style="left:1788px"></div>
<div class="vl" style="left:1868px"></div>
<div class="vl" style="left:1948px"></div>
<div class="a" style="left:348px;top:23px;width:81px;height:707px;background:#c6ebd4;mix-blend-mode:multiply"></div>
<div class="a" style="left:36px;top:45px;width:312px;height:23px;background:#c6ebd4;mix-blend-mode:multiply"></div>
<div class="a" style="left:429px;top:45px;width:1465px;height:23px;background:#c6ebd4;mix-blend-mode:multiply"></div>
<div class="a" style="left:0;top:0;width:1894px;height:23px;background:#f0f0f0;border-bottom:1px solid #9f9f9f"></div>
<div class="a" style="left:348px;top:0;width:81px;height:23px;background:#d3d3d3;border-bottom:3px solid #1f6b41"></div>
<div class="ch" style="left:36px;width:152px;color:#242424">A</div>
<div class="hs" style="left:188px"></div>
<div class="ch" style="left:188px;width:80px;color:#242424">B</div>
<div class="hs" style="left:268px"></div>
<div class="ch" style="left:268px;width:80px;color:#242424">C</div>
<div class="hs" style="left:348px"></div>
<div class="ch" style="left:348px;width:80px;color:#1f6b41">D</div>
<div class="hs" style="left:428px"></div>
<div class="ch" style="left:428px;width:80px;color:#242424">E</div>
<div class="hs" style="left:508px"></div>
<div class="ch" style="left:508px;width:80px;color:#242424">F</div>
<div class="hs" style="left:588px"></div>
<div class="ch" style="left:588px;width:80px;color:#242424">G</div>
<div class="hs" style="left:668px"></div>
<div class="ch" style="left:668px;width:80px;color:#242424">H</div>
<div class="hs" style="left:748px"></div>
<div class="ch" style="left:748px;width:80px;color:#242424">I</div>
<div class="hs" style="left:828px"></div>
<div class="ch" style="left:828px;width:80px;color:#242424">J</div>
<div class="hs" style="left:908px"></div>
<div class="ch" style="left:908px;width:80px;color:#242424">K</div>
<div class="hs" style="left:988px"></div>
<div class="ch" style="left:988px;width:80px;color:#242424">L</div>
<div class="hs" style="left:1068px"></div>
<div class="ch" style="left:1068px;width:80px;color:#242424">M</div>
<div class="hs" style="left:1148px"></div>
<div class="ch" style="left:1148px;width:80px;color:#242424">N</div>
<div class="hs" style="left:1228px"></div>
<div class="ch" style="left:1228px;width:80px;color:#242424">O</div>
<div class="hs" style="left:1308px"></div>
<div class="ch" style="left:1308px;width:80px;color:#242424">P</div>
<div class="hs" style="left:1388px"></div>
<div class="ch" style="left:1388px;width:80px;color:#242424">Q</div>
<div class="hs" style="left:1468px"></div>
<div class="ch" style="left:1468px;width:80px;color:#242424">R</div>
<div class="hs" style="left:1548px"></div>
<div class="ch" style="left:1548px;width:80px;color:#242424">S</div>
<div class="hs" style="left:1628px"></div>
<div class="ch" style="left:1628px;width:80px;color:#242424">T</div>
<div class="hs" style="left:1708px"></div>
<div class="ch" style="left:1708px;width:80px;color:#242424">U</div>
<div class="hs" style="left:1788px"></div>
<div class="ch" style="left:1788px;width:80px;color:#242424">V</div>
<div class="hs" style="left:1868px"></div>
<svg class="a" style="left:18px;top:4px" width="16" height="15"><path d="M15 0 L15 14 L1 14 Z" fill="#bfbfbf"/></svg>
<div class="a" style="left:0;top:23px;width:37px;height:707px;background:#f0f0f0;border-right:1px solid #9f9f9f"></div>
<div class="a" style="left:0;top:45px;width:37px;height:23px;background:#d3d3d3;border-right:3px solid #1f6b41"></div>
<div class="rh" style="top:24px;color:#242424">1</div>
<div class="rs" style="top:45px"></div>
<div class="rh" style="top:47px;color:#1f6b41">2</div>
<div class="rs" style="top:68px"></div>
<div class="rh" style="top:70px;color:#242424">3</div>
<div class="rs" style="top:91px"></div>
<div class="rh" style="top:93px;color:#242424">4</div>
<div class="rs" style="top:114px"></div>
<div class="rh" style="top:116px;color:#242424">5</div>
<div class="rs" style="top:137px"></div>
<div class="rh" style="top:139px;color:#242424">6</div>
<div class="rs" style="top:160px"></div>
<div class="rh" style="top:162px;color:#242424">7</div>
<div class="rs" style="top:183px"></div>
<div class="rh" style="top:185px;color:#242424">8</div>
<div class="rs" style="top:206px"></div>
<div class="rh" style="top:208px;color:#242424">9</div>
<div class="rs" style="top:229px"></div>
<div class="rh" style="top:231px;color:#242424">10</div>
<div class="rs" style="top:252px"></div>
<div class="rh" style="top:254px;color:#242424">11</div>
<div class="rs" style="top:275px"></div>
<div class="rh" style="top:277px;color:#242424">12</div>
<div class="rs" style="top:298px"></div>
<div class="rh" style="top:300px;color:#242424">13</div>
<div class="rs" style="top:321px"></div>
<div class="rh" style="top:323px;color:#242424">14</div>
<div class="rs" style="top:344px"></div>
<div class="rh" style="top:346px;color:#242424">15</div>
<div class="rs" style="top:367px"></div>
<div class="rh" style="top:369px;color:#242424">16</div>
<div class="rs" style="top:390px"></div>
<div class="rh" style="top:392px;color:#242424">17</div>
<div class="rs" style="top:413px"></div>
<div class="rh" style="top:415px;color:#242424">18</div>
<div class="rs" style="top:436px"></div>
<div class="rh" style="top:438px;color:#242424">19</div>
<div class="rs" style="top:459px"></div>
<div class="rh" style="top:461px;color:#242424">20</div>
<div class="rs" style="top:482px"></div>
<div class="rh" style="top:484px;color:#242424">21</div>
<div class="rs" style="top:505px"></div>
<div class="rh" style="top:507px;color:#242424">22</div>
<div class="rs" style="top:528px"></div>
<div class="rh" style="top:530px;color:#242424">23</div>
<div class="rs" style="top:551px"></div>
<div class="rh" style="top:553px;color:#242424">24</div>
<div class="rs" style="top:574px"></div>
<div class="rh" style="top:576px;color:#242424">25</div>
<div class="rs" style="top:597px"></div>
<div class="rh" style="top:599px;color:#242424">26</div>
<div class="rs" style="top:620px"></div>
<div class="rh" style="top:622px;color:#242424">27</div>
<div class="rs" style="top:643px"></div>
<div class="rh" style="top:645px;color:#242424">28</div>
<div class="rs" style="top:666px"></div>
<div class="rh" style="top:668px;color:#242424">29</div>
<div class="rs" style="top:689px"></div>
<div class="rh" style="top:691px;color:#242424">30</div>
<div class="rs" style="top:712px"></div>
<div class="rh" style="top:714px;color:#242424">31</div>
<div class="rs" style="top:735px"></div>
<div class="cell" style="top:24px;color:#242424">AUFNR</div>
<div class="cell" style="top:47px;color:#1f4a33">0011008469334A</div>
<div class="cell" style="top:70px;color:#242424">0011008469334B</div>
<div class="cell" style="top:93px;color:#242424">0011008469334C</div>
<div class="cell" style="top:116px;color:#242424">0011008469334D</div>
<div class="cell" style="top:139px;color:#242424">0011008469334E</div>
<div class="cell" style="top:162px;color:#242424">0011008469334F</div>
<div class="cell" style="top:185px;color:#242424">0011008469334G</div>
<div class="cell" style="top:208px;color:#242424">0011008469334H</div>
<div class="cell" style="top:231px;color:#242424">0011008469334I</div>
<div class="cell" style="top:254px;color:#242424">0011008469334J</div>
<div class="cell" style="top:277px;color:#242424">0011008469334K</div>
<div class="cell" style="top:300px;color:#242424">0011008469334L</div>
<div class="cell" style="top:323px;color:#242424">0011008469334M</div>
<div class="cell" style="top:346px;color:#242424">0011008469334N</div>
<div class="cell" style="top:369px;color:#242424">0011008469334O</div>
<div class="cell" style="top:392px;color:#242424">0011008469334P</div>
<div class="cell" style="top:415px;color:#242424">0011008469334Q</div>
<div class="cell" style="top:438px;color:#242424">0011008469334R</div>
<div class="cell" style="top:461px;color:#242424">0011008469334S</div>
<div class="cell" style="top:484px;color:#242424">0011008469334T</div>
<div class="cell" style="top:507px;color:#242424">0011008469334U</div>
<div class="cell" style="top:530px;color:#242424">0011008469334V</div>
<div class="cell" style="top:553px;color:#242424">0011008469334W</div>
<div class="cell" style="top:576px;color:#242424">0011008469334X</div>
<div class="cell" style="top:599px;color:#242424">0011008469334Y</div>
<div class="cell" style="top:622px;color:#242424">0011008469334Z</div>
<div class="a" style="left:347px;top:44px;width:83px;height:26px;border:2px solid #1f6b41;background:#fff"></div>
<div class="a" style="left:425px;top:66px;width:7px;height:7px;background:#1f6b41;border:1px solid #fff"></div>
</div><div class="a" style="left:1894px;top:353px;width:26px;height:730px;background:#f0f0f0"></div>
<svg class="a" style="left:1901px;top:358px" width="12" height="10"><path d="M6 1L11 9H1Z" fill="#6f6f6f" stroke="#6f6f6f" stroke-linejoin="round"/></svg>
<div class="a" style="left:1902px;top:374px;width:11px;height:684px;border-radius:6px;background:#767676"></div>
<svg class="a" style="left:1901px;top:1070px" width="12" height="10"><path d="M6 9L11 1H1Z" fill="#6f6f6f" stroke="#6f6f6f" stroke-linejoin="round"/></svg>
<div class="a" style="left:0;top:1083px;width:1894px;height:8px;background:#fff"></div><div class="a" style="left:1894px;top:1083px;width:26px;height:40px;background:#f0f0f0"></div><div class="a" style="left:0;top:1083px;width:141px;height:40px;background:#f0f0f0;border-top-right-radius:7px"></div><div class="a" style="left:225px;top:1083px;width:1695px;height:40px;background:#f0f0f0;border-top-left-radius:7px"></div>
<svg class="a" style="left:30px;top:1093px" width="12" height="16"><path d="M9 2L3 8L9 14" fill="none" stroke="#aaa" stroke-width="1.3"/></svg>
<svg class="a" style="left:70px;top:1093px" width="12" height="16"><path d="M3 2L9 8L3 14" fill="none" stroke="#aaa" stroke-width="1.3"/></svg>
<div class="a" style="left:141px;top:1083px;width:84px;height:35px;background:#fff;border-radius:0 0 7px 7px;box-shadow:0 1px 1px rgba(0,0,0,.06)"></div>
<div class="a" style="left:153px;top:1090px;font-size:17.5px;line-height:20px;color:#242424">AUFNR</div>
<div class="a" style="left:151px;top:1113px;width:64px;height:2px;background:#107c41"></div>
<div class="a" style="left:230px;top:1092px;width:1px;height:22px;background:#d0d0d0"></div>
<svg class="a" style="left:282px;top:1093px" width="16" height="16"><path d="M8 1V15M1 8H15" stroke="#444" stroke-width="1.3"/></svg>
<svg class="a" style="left:1154px;top:1095px" width="4" height="14"><circle cx="2" cy="2" r="1.2" fill="#444"/><circle cx="2" cy="7" r="1.2" fill="#444"/><circle cx="2" cy="12" r="1.2" fill="#444"/></svg>
<svg class="a" style="left:1181px;top:1096px" width="10" height="12"><path d="M9 1L1 6L9 11Z" fill="#6f6f6f"/></svg>
<div class="a" style="left:1197px;top:1097px;width:657px;height:11px;border-radius:6px;background:#767676"></div>
<svg class="a" style="left:1880px;top:1096px" width="10" height="12"><path d="M1 1L9 6L1 11Z" fill="#6f6f6f"/></svg>
<div class="a" style="left:0;top:1123px;width:1920px;height:27px;background:#f3f3f3;border-top:1px solid #d8d8d8"></div>
<div class="rl" style="left:13px;top:1127px">就绪</div>
<svg class="a" style="left:69px;top:1129px" width="20" height="17" viewBox="0 0 20 17"><rect x="1" y="1" width="17" height="14" rx="1" fill="none" stroke="#444" stroke-width="1.3"/><path d="M1 4H18M4 7V12" stroke="#444" stroke-width="1.2"/><circle cx="12" cy="10" r="4" fill="#fff" stroke="#444" stroke-width="1.3"/><circle cx="12" cy="10" r="1.6" fill="#444"/></svg>
<svg class="a" style="left:109px;top:1127px" width="20" height="20" viewBox="0 0 20 20"><circle cx="8" cy="3.5" r="2.5" fill="none" stroke="#444" stroke-width="1.2"/><path d="M1.5 6.5L6 8.5V13L4 19M10 8.5L11 12M6 13L9 18" fill="none" stroke="#444" stroke-width="1.2"/><path d="M12 11Q12 8 15 8Q18 8 18 11Q18 13 15 14V15.5M15 17.5V19" fill="none" stroke="#444" stroke-width="1.2"/></svg>
<div class="rl" style="left:132px;top:1127px">辅助功能: 不可用</div>
<div class="a" style="left:1539px;top:1124px;width:50px;height:26px;background:#dedede"></div>
<svg class="a" style="left:1554px;top:1128px" width="19" height="17" viewBox="0 0 19 17"><rect x="1" y="1" width="17" height="15" fill="none" stroke="#444" stroke-width="1.3"/><path d="M1 5.5H18M1 10.5H18M6.5 1V16M12.5 1V16" stroke="#444" stroke-width="1.2"/></svg>
<svg class="a" style="left:1604px;top:1128px" width="19" height="17" viewBox="0 0 19 17"><rect x="1" y="1" width="17" height="15" fill="none" stroke="#444" stroke-width="1.3"/><rect x="4.5" y="3.5" width="10" height="10" fill="none" stroke="#444" stroke-width="1.2"/><path d="M6.5 6.5H12.5M6.5 9H12.5M6.5 11.5H12.5" stroke="#444" stroke-width="1"/></svg>
<svg class="a" style="left:1654px;top:1128px" width="19" height="17" viewBox="0 0 19 17"><rect x="1.5" y="1" width="17" height="15" fill="none" stroke="#444" stroke-width="1.4"/><path d="M6.5 1V9.5M11.8 1V9.5M1.5 9.5H11.8" fill="none" stroke="#444" stroke-width="1.2"/></svg>
<div class="a" style="left:1697px;top:1136px;width:8px;height:1px;background:#444"></div>
<div class="a" style="left:1713px;top:1136px;width:124px;height:1px;background:#777"></div>
<div class="a" style="left:1772px;top:1130px;width:6px;height:14px;background:#666"></div>
<svg class="a" style="left:1842px;top:1131px" width="12" height="12"><path d="M6 1V11M1 6H11" stroke="#444" stroke-width="1.1"/></svg>
<div class="a" style="left:1869px;top:1128px;font-size:15px;line-height:18px;color:#333">100%</div>
<div class="a" style="left:0;top:1150px;width:1920px;height:9px;background:#101010"></div>
<div class="a" style="left:60px;top:1150px;width:360px;height:9px;background:#f3f3f3;border-top:1px solid #c8c8c8"></div>
<div class="a" style="left:1166px;top:1150px;width:60px;height:9px;background:#3a3a3a"></div>
<div class="a" style="left:1787px;top:1153px;width:40px;height:6px;font-size:12px;line-height:14px;color:#fff;overflow:hidden"><div style="margin-top:1px">16:52</div></div>
<svg class="a" style="left:346px;top:1150px" width="46" height="9"><path d="M6 9L6.5 3L7 9Z" fill="#8fc3e8"/><path d="M39 9L39.5 3L40 9Z" fill="#8fc3e8"/></svg>
<div class="a" style="left:1555px;top:1100px;font-size:24.3px;line-height:30px;color:#f4f4f4;text-shadow:1px 1px 0 #444,-0.6px -0.6px 0 #777,1.6px 1.6px 1px #555">掘金技术社区 @ 啊俯瞰山大王</div>

</body></html>
